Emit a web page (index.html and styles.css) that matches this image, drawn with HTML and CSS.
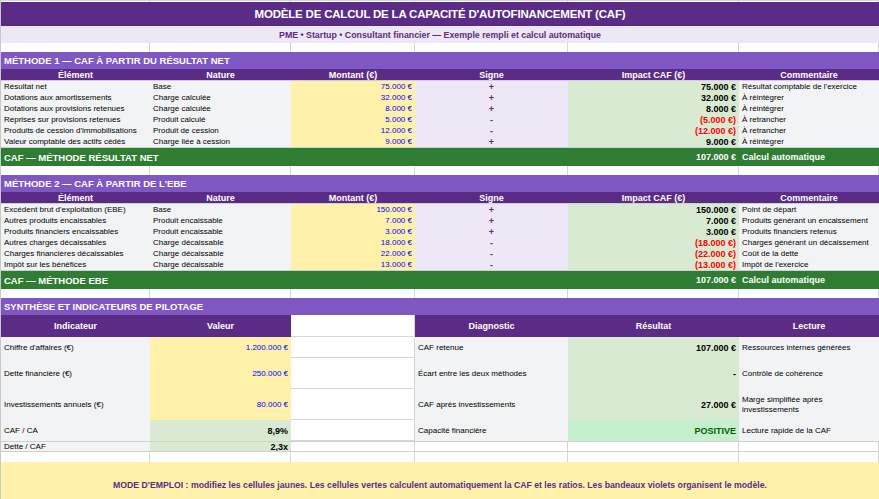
FILE: index.html
```html
<!DOCTYPE html>
<html lang="fr">
<head>
<meta charset="utf-8">
<title>Modèle de calcul de la CAF</title>
<link rel="stylesheet" href="styles.css">
</head>
<body>
<div class="sheet">
  <div class="row gap top"><div class="cell"></div><div class="cell"></div><div class="cell"></div><div class="cell"></div><div class="cell"></div><div class="cell"></div></div>
  <div class="title">MODÈLE DE CALCUL DE LA CAPACITÉ D'AUTOFINANCEMENT (CAF)</div>
  <div class="subtitle">PME • Startup • Consultant financier — Exemple rempli et calcul automatique</div>
  <div class="row gap empty"><div class="cell"></div><div class="cell"></div><div class="cell"></div><div class="cell"></div><div class="cell"></div><div class="cell"></div></div>

  <div class="section">MÉTHODE 1 — CAF À PARTIR DU RÉSULTAT NET</div>
  <div class="row head">
    <div class="cell ctr">Élément</div><div class="cell ctr">Nature</div><div class="cell ctr">Montant (€)</div><div class="cell ctr">Signe</div><div class="cell ctr">Impact CAF (€)</div><div class="cell ctr">Commentaire</div>
  </div>
  <div class="block">
    <div class="row data"><div class="cell g">Résultat net</div><div class="cell g">Base</div><div class="cell y r">75.000 €</div><div class="cell s ctr">+</div><div class="cell v r">75.000 €</div><div class="cell g">Résultat comptable de l'exercice</div></div>
    <div class="row data"><div class="cell g">Dotations aux amortissements</div><div class="cell g">Charge calculée</div><div class="cell y r">32.000 €</div><div class="cell s ctr">+</div><div class="cell v r">32.000 €</div><div class="cell g">À réintégrer</div></div>
    <div class="row data"><div class="cell g">Dotations aux provisions retenues</div><div class="cell g">Charge calculée</div><div class="cell y r">8.000 €</div><div class="cell s ctr">+</div><div class="cell v r">8.000 €</div><div class="cell g">À réintégrer</div></div>
    <div class="row data"><div class="cell g">Reprises sur provisions retenues</div><div class="cell g">Produit calculé</div><div class="cell y r">5.000 €</div><div class="cell s ctr">-</div><div class="cell v r neg">(5.000 €)</div><div class="cell g">À retrancher</div></div>
    <div class="row data"><div class="cell g">Produits de cession d'immobilisations</div><div class="cell g">Produit de cession</div><div class="cell y r">12.000 €</div><div class="cell s ctr">-</div><div class="cell v r neg">(12.000 €)</div><div class="cell g">À retrancher</div></div>
    <div class="row data"><div class="cell g">Valeur comptable des actifs cédés</div><div class="cell g">Charge liée à cession</div><div class="cell y r">9.000 €</div><div class="cell s ctr">+</div><div class="cell v r">9.000 €</div><div class="cell g">À réintégrer</div></div>
  </div>
  <div class="row total"><div class="cell label">CAF — MÉTHODE RÉSULTAT NET</div><div class="cell r">107.000 €</div><div class="cell">Calcul automatique</div></div>
  <div class="row gap empty"><div class="cell"></div><div class="cell"></div><div class="cell"></div><div class="cell"></div><div class="cell"></div><div class="cell"></div></div>

  <div class="section">MÉTHODE 2 — CAF À PARTIR DE L'EBE</div>
  <div class="row head">
    <div class="cell ctr">Élément</div><div class="cell ctr">Nature</div><div class="cell ctr">Montant (€)</div><div class="cell ctr">Signe</div><div class="cell ctr">Impact CAF (€)</div><div class="cell ctr">Commentaire</div>
  </div>
  <div class="block">
    <div class="row data"><div class="cell g">Excédent brut d'exploitation (EBE)</div><div class="cell g">Base</div><div class="cell y r">150.000 €</div><div class="cell s ctr">+</div><div class="cell v r">150.000 €</div><div class="cell g">Point de départ</div></div>
    <div class="row data"><div class="cell g">Autres produits encaissables</div><div class="cell g">Produit encaissable</div><div class="cell y r">7.000 €</div><div class="cell s ctr">+</div><div class="cell v r">7.000 €</div><div class="cell g">Produits générant un encaissement</div></div>
    <div class="row data"><div class="cell g">Produits financiers encaissables</div><div class="cell g">Produit encaissable</div><div class="cell y r">3.000 €</div><div class="cell s ctr">+</div><div class="cell v r">3.000 €</div><div class="cell g">Produits financiers retenus</div></div>
    <div class="row data"><div class="cell g">Autres charges décaissables</div><div class="cell g">Charge décaissable</div><div class="cell y r">18.000 €</div><div class="cell s ctr">-</div><div class="cell v r neg">(18.000 €)</div><div class="cell g">Charges générant un décaissement</div></div>
    <div class="row data"><div class="cell g">Charges financières décaissables</div><div class="cell g">Charge décaissable</div><div class="cell y r">22.000 €</div><div class="cell s ctr">-</div><div class="cell v r neg">(22.000 €)</div><div class="cell g">Coût de la dette</div></div>
    <div class="row data"><div class="cell g">Impôt sur les bénéfices</div><div class="cell g">Charge décaissable</div><div class="cell y r">13.000 €</div><div class="cell s ctr">-</div><div class="cell v r neg">(13.000 €)</div><div class="cell g">Impôt de l'exercice</div></div>
  </div>
  <div class="row total"><div class="cell label">CAF — MÉTHODE EBE</div><div class="cell r">107.000 €</div><div class="cell">Calcul automatique</div></div>
  <div class="row gap empty"><div class="cell"></div><div class="cell"></div><div class="cell"></div><div class="cell"></div><div class="cell"></div><div class="cell"></div></div>

  <div class="section">SYNTHÈSE ET INDICATEURS DE PILOTAGE</div>
  <div class="row shead">
    <div class="cell ctr">Indicateur</div><div class="cell ctr">Valeur</div><div class="cell blank"></div><div class="cell ctr">Diagnostic</div><div class="cell ctr">Résultat</div><div class="cell ctr">Lecture</div>
  </div>
  <div class="row srow h21"><div class="cell g">Chiffre d'affaires (€)</div><div class="cell y r">1.200.000 €</div><div class="cell blank"></div><div class="cell g">CAF retenue</div><div class="cell v r">107.000 €</div><div class="cell g">Ressources internes générées</div></div>
  <div class="row srow h31"><div class="cell g">Dette financière (€)</div><div class="cell y r">250.000 €</div><div class="cell blank"></div><div class="cell g">Écart entre les deux méthodes</div><div class="cell v r">-</div><div class="cell g">Contrôle de cohérence</div></div>
  <div class="row srow h31"><div class="cell g">Investissements annuels (€)</div><div class="cell y r">80.000 €</div><div class="cell blank"></div><div class="cell g">CAF après investissements</div><div class="cell v r">27.000 €</div><div class="cell g wrap">Marge simplifiée après<br>investissements</div></div>
  <div class="row srow h21"><div class="cell g">CAF / CA</div><div class="cell v r">8,9%</div><div class="cell blank"></div><div class="cell g">Capacité financière</div><div class="cell pos r">POSITIVE</div><div class="cell g">Lecture rapide de la CAF</div></div>
  <div class="row srow last"><div class="cell g">Dette / CAF</div><div class="cell v r">2,3x</div><div class="cell blank"></div><div class="cell blank"></div><div class="cell blank"></div><div class="cell blank"></div></div>
  <div class="row gap empty10"><div class="cell"></div><div class="cell"></div><div class="cell"></div><div class="cell"></div><div class="cell"></div><div class="cell"></div></div>

  <div class="footer"><span>MODE D'EMPLOI : modifiez les cellules jaunes. Les cellules vertes calculent automatiquement la CAF et les ratios. Les bandeaux violets organisent le modèle.</span></div>
</div>
</body>
</html>
```

FILE: styles.css
```css
* {
  box-sizing: border-box;
  margin: 0;
  padding: 0;
}

html, body {
  margin: 0;
  background: #ffffff;
  width: 879px;
  height: 499px;
  overflow: hidden;
}

body {
  font-family: "Liberation Sans", Arial, sans-serif;
  font-size: 8px;
  color: #000;
}

.sheet {
  width: 879px;
  border-left: 1px solid #c9c9c9;
}

.row {
  display: grid;
  grid-template-columns: 149px 141px 124px 153px 171px 140px;
}

.cell {
  display: flex;
  align-items: center;
  padding: 0 3px;
  white-space: nowrap;
  overflow: hidden;
  min-width: 0;
}

.r { justify-content: flex-end; }
.ctr { justify-content: center; }

/* empty grid rows */
.gap .cell { border-right: 1px solid #d6d6d6; }
.top { height: 2px; border-top: 1px solid #d6d6d6; }
.empty { height: 9px; }
.empty10 { height: 10px; }

/* banners */
.title {
  height: 24px;
  background: #5b2c86;
  color: #fff;
  font-size: 11.5px;
  font-weight: bold;
  letter-spacing: -0.2px;
  display: flex;
  align-items: center;
  justify-content: center;
}

.subtitle {
  height: 17px;
  background: #ede7f6;
  color: #5b2c86;
  font-size: 8.8px;
  font-weight: bold;
  display: flex;
  align-items: center;
  justify-content: center;
}

.section {
  height: 17px;
  background: #7e57c2;
  color: #fff;
  font-size: 9.5px;
  font-weight: bold;
  padding-left: 3px;
  display: flex;
  align-items: center;
}

.head {
  height: 11px;
  background: #5b2c86;
  color: #fff;
  font-size: 9px;
  font-weight: bold;
}

.block {
  border-top: 1px solid #cfcfcf;
  border-bottom: 1px solid #cfcfcf;
}

.data { height: 11px; }

/* cell colours */
.g { background: #f2f3f5; }
.y { background: #fff1aa; color: #0000ff; }
.s { background: #ede7f6; color: #5b2c86; font-weight: bold; font-size: 9px; }
.v { background: #d9ead3; font-weight: bold; font-size: 9px; }
.neg { color: #ff0000; }
.pos { background: #c6efce; color: #006100; font-weight: bold; font-size: 9px; }

/* total bars */
.total {
  height: 18px;
  background: #2e7d32;
  color: #fff;
  font-weight: bold;
  font-size: 9px;
}
.total .label {
  grid-column: 1 / 5;
  font-size: 9.5px;
}

/* synthesis */
.shead {
  height: 22px;
  background: #5b2c86;
  color: #fff;
  font-size: 9px;
  font-weight: bold;
}
.blank {
  background: #fff;
  border-right: 1px solid #d6d6d6;
  border-bottom: 1px solid #d6d6d6;
}
.h21 { height: 21px; }
.h31 { height: 31px; }
.last {
  height: 11px;
  border-top: 1px solid #d0d0d0;
  border-bottom: 1px solid #d0d0d0;
}
.last .blank { border-bottom: 0; }
.wrap {
  white-space: normal;
  line-height: 10px;
}

/* footer */
.footer {
  height: 46px;
  background: #fff1aa;
  color: #5b2c86;
  font-size: 8.7px;
  font-weight: bold;
  display: flex;
  align-items: center;
  justify-content: center;
}
```
